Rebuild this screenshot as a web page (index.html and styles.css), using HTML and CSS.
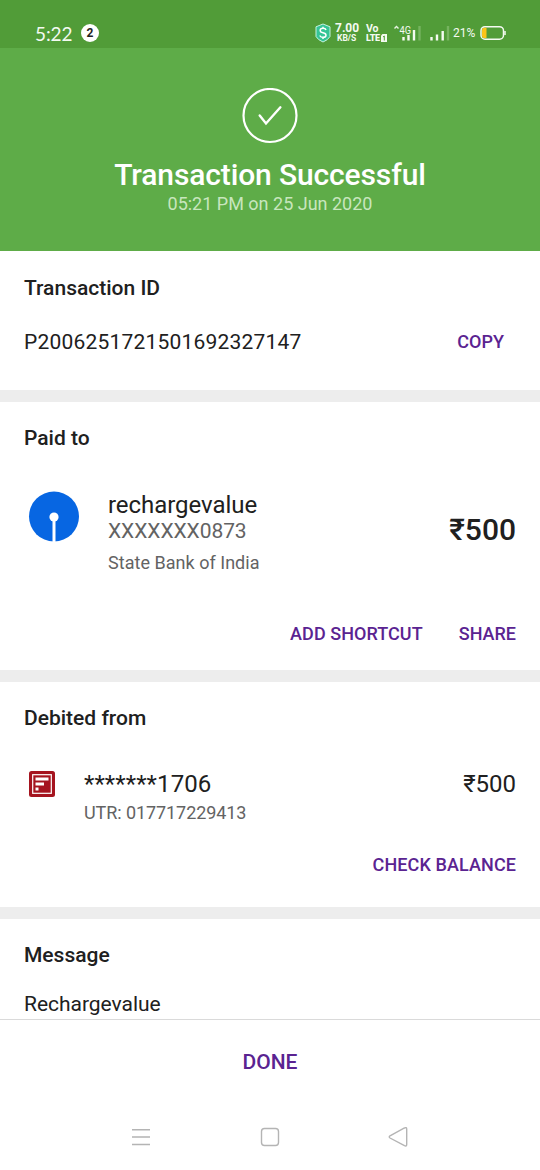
FILE: index.html
```html
<!DOCTYPE html>
<html lang="en">
<head>
<meta charset="utf-8">
<meta name="viewport" content="width=device-width, initial-scale=1">
<title>Transaction Successful</title>
<link rel="stylesheet" href="styles.css">
</head>
<body>
<div class="screen">
  <div class="statusbar">
    <span class="clock">5:22</span>
    <span class="count">2</span>
    <div class="indicators">
      <svg class="shield" width="16" height="20" viewBox="0 0 16 20">
        <path d="M8 1 15 3.800V13.500Q13 17 8 19 3 17 1 13.500V3.800Z" fill="#35c596" stroke="#c5f2df" stroke-width="1"/>
        <path d="M11 7Q10.500 5.300 8 5.300 5.200 5.300 5.200 7.400 5.200 9.200 8 9.700 11 10.200 11 12.200 11 14.300 8 14.300 5.300 14.300 5 12.500M8 3.800V5.300M8 14.300V16" fill="none" stroke="#fff" stroke-width="1.500"/>
      </svg>
      <div class="speed"><b class="rate">7.00</b><b class="unit">KB/S</b></div>
      <div class="volte">
        <b class="vo">Vo</b>
        <div class="lte-line"><b class="lte">LTE</b>
          <svg width="6" height="8" viewBox="0 0 6 8"><path d="M1.500 0H6V8H0V1.500Z" fill="#f4faf1"/><path d="M2 3 3.300 2V6.500" fill="none" stroke="#519c38"/></svg>
        </div>
      </div>
      <svg class="signal-a" width="30" height="20" viewBox="0 0 30 20">
        <path d="M1.500 5.500 3.500 3.500 5.500 5.500" fill="none" stroke="#e8f4e2" stroke-width="1.400"/>
        <text class="net" x="6.500" y="10.500" textLength="11.500" lengthAdjust="spacingAndGlyphs">4G</text>
        <path d="M10.500 14V17.500M15.500 12V17.500M21 7V17.500" stroke="#f4faf1" stroke-width="2.400"/>
        <path d="M26.500 3V17.500" stroke="#76b45f" stroke-width="2.400"/>
      </svg>
      <svg class="signal-b" width="22" height="20" viewBox="0 0 22 20">
        <path d="M2.500 14V17.500M8 11.500V17.500M13.700 8V17.500" stroke="#f4faf1" stroke-width="2.400"/>
        <path d="M19 3V17.500" stroke="#76b45f" stroke-width="2.400"/>
      </svg>
      <span class="percent">21%</span>
      <svg class="battery" width="26" height="16" viewBox="0 0 26 16">
        <rect x="1" y="1.700" width="22.500" height="12.500" rx="4" fill="none" stroke="#f4faf1" stroke-width="1.500"/>
        <path d="M4.500 2.800H6.500V13.100H4.500Q2 13.100 2 10.500V5.500Q2 2.800 4.500 2.800Z" fill="#fcc419"/>
        <path d="M25 6V10" stroke="#f4faf1" stroke-width="1.500"/>
      </svg>
    </div>
  </div>
  <header class="hero">
    <svg class="success" width="56" height="56" viewBox="0 0 56 56" fill="none" stroke="#fff">
      <circle cx="28" cy="27.500" r="26.500" stroke-width="2.200"/>
      <path d="M17.700 27.500 24 35.500 38.400 19.300" stroke-width="2.400" stroke-linecap="round"/>
    </svg>
    <h1 class="title">Transaction Successful</h1>
    <p class="date">05:21 PM on 25 Jun 2020</p>
  </header>
  <section class="card card-id">
    <h2 class="heading h-id">Transaction ID</h2>
    <div class="row id-row">
      <span class="txn">P2006251721501692327147</span>
      <button class="action copy">COPY</button>
    </div>
  </section>
  <section class="card card-paid">
    <h2 class="heading">Paid to</h2>
    <div class="row payee">
      <svg class="sbi" width="52" height="52" viewBox="0 0 52 52">
        <circle cx="26" cy="25.500" r="25" fill="#0766e2"/>
        <circle cx="26" cy="26" r="4.600" fill="#fff"/>
        <path d="M26 28V52" stroke="#fff" stroke-width="3"/>
      </svg>
      <div class="who">
        <span class="name">rechargevalue</span>
        <span class="account">XXXXXXX0873</span>
        <span class="bank">State Bank of India</span>
      </div>
      <strong class="amount-big">₹500</strong>
    </div>
    <div class="actions">
      <button class="action shortcut">ADD SHORTCUT</button>
      <button class="action share">SHARE</button>
    </div>
  </section>
  <section class="card card-debit">
    <h2 class="heading">Debited from</h2>
    <div class="row source">
      <svg class="bankmark" width="26" height="26" viewBox="0 0 26 26">
        <rect width="26" height="26" rx="2.500" fill="#a5141f"/>
        <rect x="3.700" y="3.700" width="18.600" height="18.600" fill="none" stroke="#fff" stroke-width="1.200"/>
        <path d="M6.500 6.500H19.500V9.500H6.500ZM6.500 11.500H15V14.500H6.500ZM6.500 16.500H9.500V19.500H6.500Z" fill="#fff"/>
      </svg>
      <div class="who-debit">
        <span class="masked">*******1706</span>
        <span class="utr">UTR: 017717229413</span>
      </div>
      <span class="amount">₹500</span>
    </div>
    <div class="actions balance-row"><button class="action balance">CHECK BALANCE</button></div>
  </section>
  <section class="card card-message">
    <h2 class="heading">Message</h2>
    <p class="message">Rechargevalue</p>
  </section>
  <footer class="footer"><button class="action done">DONE</button></footer>
  <nav class="nav">
    <svg width="20" height="20" viewBox="0 0 20 20"><path d="M1 2.700H19M1 10H19M1 17.500H19" stroke="#b4b4b4" stroke-width="1.400"/></svg>
    <svg width="20" height="20" viewBox="0 0 20 20"><rect x="1.500" y="1.500" width="17" height="17" rx="3" fill="none" stroke="#b4b4b4" stroke-width="1.400"/></svg>
    <svg width="20" height="20" viewBox="0 0 20 20"><path d="M2 8.800 16.500 1Q18.700 0 18.700 2V17.500Q18.700 19.800 16.500 18.700L2 11Q.5 10 2 8.800Z" fill="none" stroke="#b4b4b4" stroke-width="1.400"/></svg>
  </nav>
</div>
</body>
</html>
```
FILE: styles.css
```css
* { box-sizing: border-box; margin: 0; padding: 0; }
body { background: #fff; font-family: Roboto, "Liberation Sans", sans-serif; color: #202020; }
.screen { width: 540px; height: 1170px; display: flex; flex-direction: column; overflow: hidden; white-space: nowrap; }
.screen svg { display: block; flex: none; }
button { border: 0; background: none; font-family: inherit; }

.statusbar { height: 48px; flex: none; background: #519c38; color: #f4faf1; display: flex; align-items: center; padding: 18px 34px 0 35px; }
.clock { padding-top: 2px; font-family: Lato, sans-serif; font-size: 19px; line-height: 28px; width: 46px; letter-spacing: -0.1px; }
.count { width: 18px; height: 18px; border-radius: 9px; background: #fff; color: #222; font-size: 12px; font-weight: 700; line-height: 18px; text-align: center; }
.indicators { margin-left: auto; display: flex; align-items: center; height: 20px; }
.shield { margin-right: 4px; }
.speed { width: 31px; display: flex; flex-direction: column; }
.rate { font-size: 12px; line-height: 11px; font-weight: 700; }
.unit { font-size: 8.5px; line-height: 9px; padding-left: 2px; }
.volte { width: 27px; display: flex; flex-direction: column; }
.vo { font-size: 10.5px; line-height: 10px; }
.lte-line { display: flex; align-items: center; gap: 1px; }
.lte { font-size: 9px; line-height: 9px; font-weight: 900; letter-spacing: -0.3px; }
.net { font-size: 10.5px; fill: #f4faf1; }
.signal-b { margin-left: 6px; }
.percent { width: 27px; margin-left: 2px; font-size: 12px; }

.hero { height: 203px; flex: none; background: #5eac48; color: #fff; display: flex; flex-direction: column; align-items: center; padding-top: 40px; }
.title { margin-top: 14px; font-size: 30px; font-weight: 500; line-height: 34px; letter-spacing: -0.13px; }
.date { padding-top: 1px; font-size: 18px; line-height: 22px; color: #c8e6be; }

.card { flex: none; display: flex; flex-direction: column; padding: 0 24px; border-bottom: 12px solid #ededed; }
.card-id { height: 151px; }
.card-paid { height: 280px; }
.card-debit { height: 237px; }
.card-message { height: 101px; border-bottom: 1px solid #dadada; }
.heading { margin-top: 24px; font-size: 21px; font-weight: 500; line-height: 24px; }
.h-id { margin-top: 25px; }
.row { display: flex; }
.id-row { margin-top: 30px; align-items: center; justify-content: space-between; padding-right: 12px; }
.txn { font-size: 21px; line-height: 24px; letter-spacing: 0.2px; }
.action { color: #5a2391; font-size: 18px; font-weight: 500; line-height: 24px; }
.payee { margin-top: 41px; padding-left: 4px; }
.who { margin-left: 28px; display: flex; flex-direction: column; }
.name { padding-top: 1px; font-size: 24px; line-height: 26px; letter-spacing: -0.05px; }
.account { color: #636363; font-size: 21px; line-height: 26px; letter-spacing: -0.07px; }
.bank { margin-top: 6px; color: #636363; font-size: 18px; line-height: 26px; letter-spacing: 0.03px; }
.amount-big { margin: 22px 0 0 auto; font-size: 30px; font-weight: 500; line-height: 34px; }
.actions { display: flex; justify-content: flex-end; gap: 36px; margin-top: 46px; }
.shortcut { letter-spacing: 0.06px; }
.source { margin-top: 40px; padding-left: 5px; }
.bankmark { margin-top: 1px; }
.who-debit { margin-left: 29px; display: flex; flex-direction: column; }
.masked { font-size: 24px; line-height: 28px; letter-spacing: 0.1px; }
.utr { padding-top: 1px; color: #636363; font-size: 18px; line-height: 28px; letter-spacing: -0.08px; }
.amount { margin-left: auto; font-size: 24px; line-height: 28px; }
.balance-row { margin-top: 26px; }
.balance { letter-spacing: 0.1px; }
.message { margin-top: 25px; font-size: 21px; line-height: 24px; letter-spacing: -0.03px; }
.footer { height: 84px; flex: none; display: flex; align-items: center; justify-content: center; }
.done { font-size: 21px; }
.nav { height: 66px; flex: none; display: flex; justify-content: space-between; align-items: center; padding: 0 132px 0 131px; }
```
